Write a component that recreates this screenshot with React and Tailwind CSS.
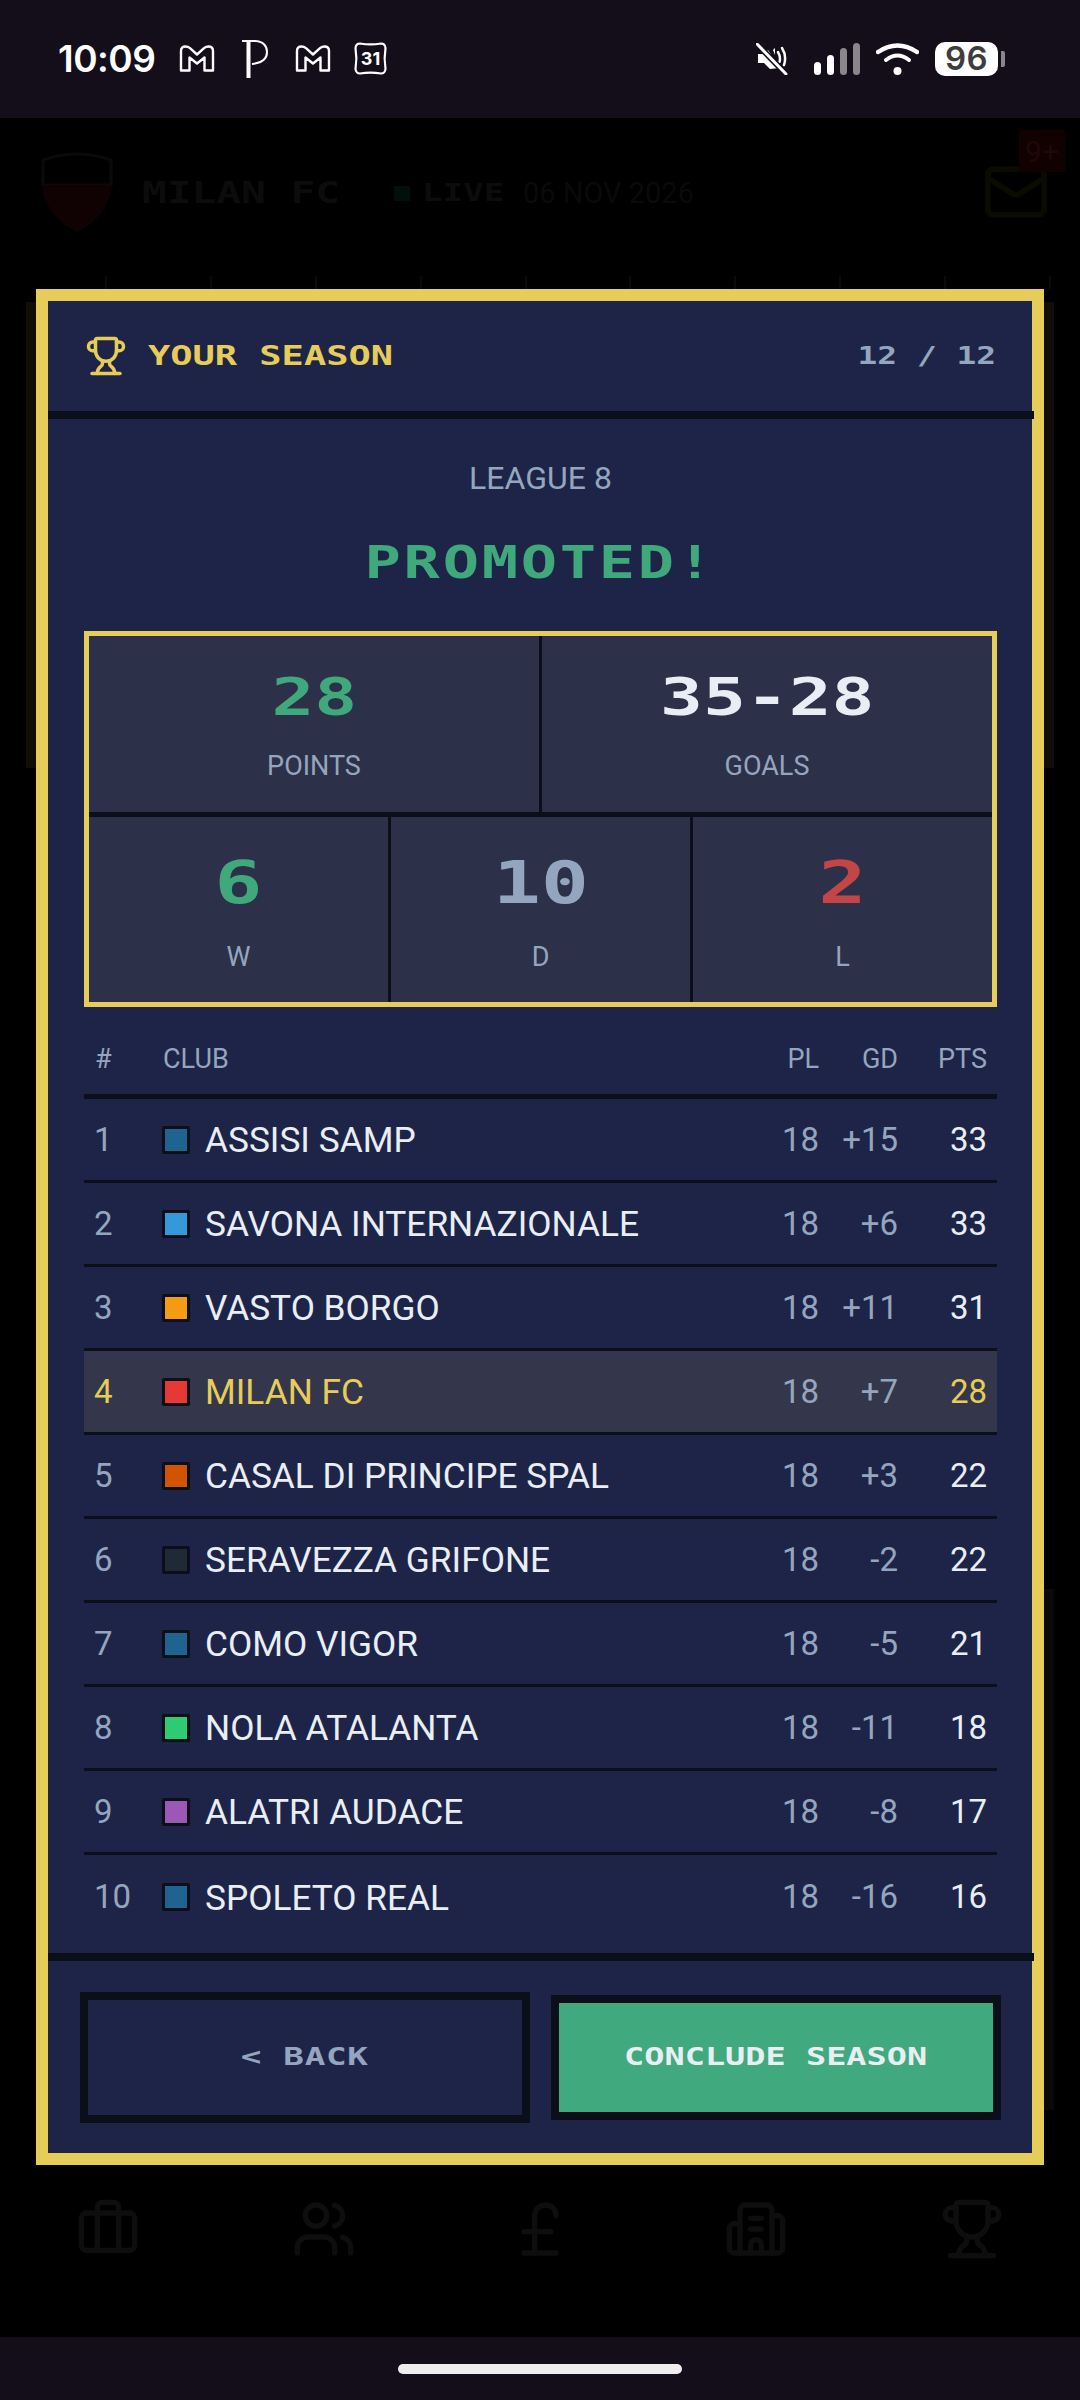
import { Briefcase, Building2, Mail, PoundSterling, Trophy, Users } from "lucide-react";

const CLUBS = [
  { pos: 1, name: "ASSISI SAMP", gd: "+15", pts: 33, swatch: "bg-[#1f6391]" },
  { pos: 2, name: "SAVONA INTERNAZIONALE", gd: "+6", pts: 33, swatch: "bg-[#3498db]" },
  { pos: 3, name: "VASTO BORGO", gd: "+11", pts: 31, swatch: "bg-[#f39c12]" },
  { pos: 4, name: "MILAN FC", gd: "+7", pts: 28, swatch: "bg-[#e53935]", mine: true },
  { pos: 5, name: "CASAL DI PRINCIPE SPAL", gd: "+3", pts: 22, swatch: "bg-[#d35400]" },
  { pos: 6, name: "SERAVEZZA GRIFONE", gd: "-2", pts: 22, swatch: "bg-[#1f2a36]" },
  { pos: 7, name: "COMO VIGOR", gd: "-5", pts: 21, swatch: "bg-[#1f6391]" },
  { pos: 8, name: "NOLA ATALANTA", gd: "-11", pts: 18, swatch: "bg-[#2ecc71]" },
  { pos: 9, name: "ALATRI AUDACE", gd: "-8", pts: 17, swatch: "bg-[#9b59b6]" },
  { pos: 10, name: "SPOLETO REAL", gd: "-16", pts: 16, swatch: "bg-[#1f6391]" },
];

const TICKS = [0, 1, 2, 3, 4, 5, 6, 7, 8, 9];

// stands in for the pixel font: wide bold mono
const Pixel = ({ className = "", children }) => (
  <span
    className={`inline-block whitespace-pre font-['DejaVu_Sans_Mono',monospace] font-bold scale-x-[1.37] ${className}`}
  >
    {children}
  </span>
);

const GmailIcon = () => (
  <svg width="36" height="27" viewBox="0 0 36 27" fill="none" stroke="#fff" strokeWidth="2.4" strokeLinejoin="round">
    <path d="M2 6Q2 1.5 6.500 1.500Q9 1.500 11 3.200L18 9.500L25 3.200Q27 1.500 29.500 1.500Q34 1.500 34 6V25.500H25.500V12.500L18 18.500L10.500 12.500V25.500H2Z" />
  </svg>
);

const StatusBar = () => (
  <div className="flex h-[118px] shrink-0 items-center justify-between bg-[#130e1a] pb-[1px] pl-[58px] pr-[75px]">
    <div className="flex items-center">
      <span className="w-[121px] font-['Inter',sans-serif] text-[37px] font-semibold leading-none tracking-[-0.5px] text-white">
        10:09
      </span>
      <GmailIcon />
      <svg className="ml-[27px]" width="26" height="38" viewBox="0 0 26 38" fill="none" stroke="#fff">
        <path d="M0 1H13C21 1 25 6 25 12C25 19 20 23 10 24" strokeWidth="2" />
        <path d="M6.500 1V38" strokeWidth="4" />
      </svg>
      <div className="ml-[27px]">
        <GmailIcon />
      </div>
      <div className="relative ml-[23px] flex h-[33px] w-[33px] items-center justify-center">
        <svg className="absolute inset-0" width="33" height="33" viewBox="0 0 33 33" fill="none" stroke="#fff" strokeWidth="2.200">
          <path d="M6 1.500C12 2.500 21 2.500 27 1.500Q31 1.500 31.500 6C30.500 12 30.500 21 31.500 27Q31 31.500 27 31.500C21 30.500 12 30.500 6 31.500Q2 31.500 1.500 27C2.500 21 2.500 12 1.500 6Q2 1.500 6 1.500Z" />
        </svg>
        <span className="font-['Inter',sans-serif] text-[18px] font-bold leading-none text-white">31</span>
      </div>
    </div>
    <div className="flex items-center">
      <svg width="32" height="32" viewBox="0 0 32 32" fill="none">
        <path d="M2 11H8L12 7L24 25L14 26L8 20H2Z" fill="#fff" />
        <path d="M17 7L19 5V12Z" fill="#fff" />
        <path d="M22 9Q25 14 23.500 19M26 5Q31 13 28 22" stroke="#fff" strokeWidth="2.500" strokeLinecap="round" />
        <path d="M2 2L29 30" stroke="#130e1a" strokeWidth="6" />
        <path d="M1 1L30 31" stroke="#fff" strokeWidth="3" strokeLinecap="round" />
      </svg>
      <div className="ml-[26px] flex items-end gap-[6px]">
        <div className="h-[13px] w-[7px] rounded-full bg-white" />
        <div className="h-[20px] w-[7px] rounded-full bg-white" />
        <div className="h-[27px] w-[7px] rounded-full bg-[#8a878c]" />
        <div className="h-[32px] w-[7px] rounded-full bg-[#8a878c]" />
      </div>
      <svg className="ml-[16px]" width="43" height="32" viewBox="0 0 43 32" fill="none" stroke="#fff" strokeLinecap="round">
        <path d="M2 9Q21.500 -4 41 9" strokeWidth="4.500" />
        <path d="M10 17Q21.500 8 33 17" strokeWidth="4" />
        <circle cx="21.500" cy="28" r="4" fill="#fff" stroke="none" />
      </svg>
      <div className="ml-[16px] flex h-[34px] w-[63px] items-center justify-center rounded-[10px] bg-white font-['Inter',sans-serif] text-[33px] font-semibold leading-none tracking-[0.5px] text-[#3d3d3d]">
        96
      </div>
      <div className="ml-[3px] h-[16px] w-[4px] rounded-r-[2px] bg-[#8a878c]" />
    </div>
  </div>
);

// what is left of the page behind the dialog, almost gone under the scrim
const DimmedPage = () => (
  <div className="relative flex h-full flex-col justify-between">
    <div className="absolute left-[105px] top-[158px] flex w-[946px] justify-between">
      {TICKS.map((tick) => (
        <div key={tick} className="h-[13px] w-[2px] bg-[#0a0a0a]" />
      ))}
    </div>
    <div className="absolute left-[26px] top-[184px] h-[466px] w-[1028px] bg-[#100e07]" />
    <div className="absolute left-[100px] top-[1471px] h-[521px] w-[954px] bg-[#0a0a0a]" />

    <div className="flex h-[150px] items-start pl-[40px] pr-[30px] pt-[33px]">
      <svg width="74" height="82" viewBox="0 0 74 82" fill="none">
        <path d="M3 9Q37 -3 71 9V34H3Z" stroke="#0a0a0a" strokeWidth="3" />
        <path d="M2 34H72C70 56 56 72 37 81C18 72 4 56 2 34Z" fill="#100202" />
      </svg>
      <div className="ml-[28px] mt-[24px] flex items-center">
        <span className="w-[252px]">
          <Pixel className="origin-left text-[30px] leading-[36px] text-[#0c0c0c]">MILAN FC</Pixel>
        </span>
        <div className="h-[15px] w-[16px] bg-[#00100a]" />
        <span className="ml-[12px] w-[101px]">
          <Pixel className="origin-left text-[25px] leading-[36px] text-[#0a0d0a]">LIVE</Pixel>
        </span>
        <span className="font-['Roboto',sans-serif] text-[29px] leading-[36px] text-[#0a0a0a]">06 NOV 2026</span>
      </div>
      <div className="relative ml-auto mt-[7px]">
        <Mail size={68} strokeWidth={2} className="text-[#0b0b02]" />
        <div className="absolute left-[37px] top-[-28px] flex h-[42px] w-[46px] items-center justify-center bg-[#120101] font-['Roboto',sans-serif] text-[30px] text-[#1f0808]">
          9+
        </div>
      </div>
    </div>
    <div className="relative grid h-[173px] grid-cols-5 items-start justify-items-center pt-[33px] text-[#0e0e0e]">
      <Briefcase size={64} />
      <Users size={64} />
      <PoundSterling size={64} />
      <Building2 size={64} />
      <Trophy size={64} />
    </div>
  </div>
);

const StatCell = ({ value, label, valueColor, tall = false, className = "" }) => (
  <div className={`flex min-w-0 flex-1 flex-col items-center ${tall ? "pt-[39px]" : "pt-[42px]"} ${className}`}>
    {tall ? (
      <Pixel className={`text-[52px] leading-[44px] ${valueColor}`}>{value}</Pixel>
    ) : (
      <Pixel className={`text-[58px] leading-[48px] ${valueColor}`}>{value}</Pixel>
    )}
    <span className={`font-['Roboto',sans-serif] text-[27px] leading-[30px] text-[#94a6bf] ${tall ? "mt-[32px]" : "mt-[35px]"}`}>
      {label}
    </span>
  </div>
);

const Row = ({ club, last }) => (
  <div
    className={`grid h-[84px] grid-cols-[68px_1fr_60px_79px_89px] items-center pl-[10px] pr-[10px] font-['Roboto',sans-serif] text-[33px] ${
      club.mine ? "bg-[#34374c]" : ""
    } ${last ? "" : "border-b-[3px] border-[#0a0f1a]"}`}
  >
    <span className={club.mine ? "text-[#e6cd5a]" : "text-[#94a6bf]"}>{club.pos}</span>
    <div className="flex items-center gap-[15px]">
      <div className={`h-[28px] w-[28px] rounded-[2px] border-[3px] border-[#0a0f1a] ${club.swatch}`} />
      <span className={`pt-[2px] text-[35.25px] ${club.mine ? "text-[#e6cd5a]" : "text-[#e8eef4]"}`}>{club.name}</span>
    </div>
    <span className="text-right text-[#94a6bf]">18</span>
    <span className="text-right text-[#94a6bf]">{club.gd}</span>
    <span className={`text-right ${club.mine ? "text-[#e6cd5a]" : "text-[#e8eef4]"}`}>{club.pts}</span>
  </div>
);

const SeasonDialog = () => (
  <div className="absolute left-[36px] top-[171px] flex h-[1876px] w-[1008px] flex-col border-[12px] border-[#e6cd5a] bg-[#1e2448]">
    <div className="mr-[-2px] flex h-[118px] shrink-0 items-center justify-between border-b-[8px] border-[#0a0f1a] pl-[37px] pr-[38px]">
      <div className="flex items-center gap-[21px] text-[#e6cd5a]">
        <Trophy size={42} strokeWidth={2} />
        <Pixel className="origin-left text-[27px] leading-[32px]">YOUR SEASON</Pixel>
      </div>
      <Pixel className="origin-right text-[24px] leading-[32px] text-[#94a6bf]">12 / 12</Pixel>
    </div>

    <div className="flex flex-1 flex-col pl-[36px] pr-[35px] pt-[39px]">
      <div className="text-center font-['Roboto',sans-serif] text-[32px] leading-[40px] text-[#94a6bf]">LEAGUE 8</div>
      <div className="mt-[40px] text-center">
        <Pixel className="text-[44px] leading-[50px] tracking-[2px] text-[#3fa97c]">PROMOTED!</Pixel>
      </div>

      <div className="mt-[43px] border-[5px] border-[#e6cd5a] bg-[#2d3049]">
        <div className="flex h-[181px] border-b-[5px] border-[#0a0f1a]">
          <StatCell tall value="28" label="POINTS" valueColor="text-[#3fa97c]" className="border-r-[3px] border-[#0a0f1a]" />
          <StatCell tall value="35-28" label="GOALS" valueColor="text-[#e8eef4]" />
        </div>
        <div className="flex h-[185px]">
          <StatCell value="6" label="W" valueColor="text-[#3fa97c]" className="border-r-[3px] border-[#0a0f1a]" />
          <StatCell value="10" label="D" valueColor="text-[#94a6bf]" className="border-r-[3px] border-[#0a0f1a]" />
          <StatCell value="2" label="L" valueColor="text-[#c44545]" />
        </div>
      </div>

      <div className="mt-[37px] grid grid-cols-[68px_1fr_60px_79px_89px] border-b-[5px] border-[#0a0f1a] pb-[20px] pl-[11px] pr-[10px] font-['Roboto',sans-serif] text-[27px] leading-[30px] text-[#94a6bf]">
        <span>#</span>
        <span>CLUB</span>
        <span className="text-right">PL</span>
        <span className="text-right">GD</span>
        <span className="text-right">PTS</span>
      </div>
      {CLUBS.map((club) => (
        <Row key={club.pos} club={club} last={club.pos === CLUBS.length} />
      ))}
    </div>

    <div className="mr-[-2px] flex h-[200px] shrink-0 items-center gap-[21px] border-t-[8px] border-[#0a0f1a] pl-[32px] pr-[33px]">
      <button className="flex h-[131px] flex-1 items-center justify-center border-[8px] border-[#0a0f1a] bg-[#1e2448]">
        <Pixel className="text-[25px] leading-[30px] tracking-[0.5px] text-[#94a6bf]">{"< BACK"}</Pixel>
      </button>
      <button className="flex h-[125px] flex-1 items-center justify-center border-[8px] border-[#0a0f1a] bg-[#41a97e]">
        <Pixel className="text-[24.5px] leading-[30px] text-[#e8eef4]">CONCLUDE SEASON</Pixel>
      </button>
    </div>
  </div>
);

export default function App() {
  return (
    <div className="flex h-[2400px] w-[1080px] flex-col overflow-hidden bg-black">
      <StatusBar />
      <div className="relative flex-1">
        <DimmedPage />
        <SeasonDialog />
      </div>
      <div className="flex h-[63px] shrink-0 justify-center bg-[#130e1a] pt-[27px]">
        <div className="h-[10px] w-[284px] rounded-full bg-[#eeeeee]" />
      </div>
    </div>
  );
}
